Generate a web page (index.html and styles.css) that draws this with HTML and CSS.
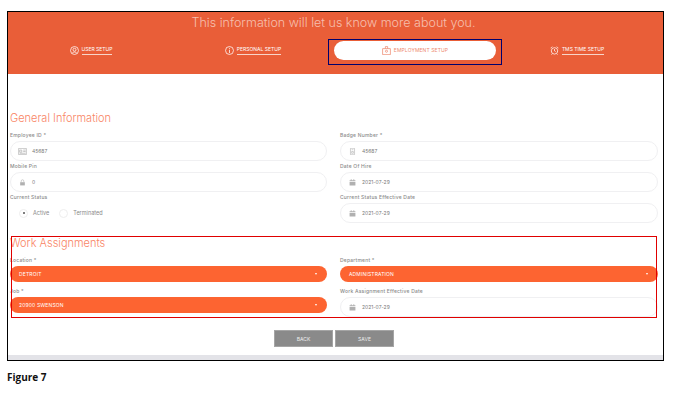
FILE: index.html
```html
<!DOCTYPE html>
<html lang="en">
<head>
<meta charset="utf-8">
<title>Employment Setup</title>
<link rel="stylesheet" href="styles.css">
</head>
<body>
<main class="frame">
  <header class="banner">
    <h1 class="banner-title">This information will let us know more about you.</h1>
    <nav class="tabs">
      <a class="tab">
        <svg class="tab-icon" viewBox="0 0 12 12"><circle cx="6" cy="6" r="5.300" class="ln"/><circle cx="6" cy="5" r="2" class="ln"/><path d="M3 9.300c.8-1.600 5.200-1.600 6 0" class="ln"/></svg>
        <span class="tab-text">USER SETUP</span>
      </a>
      <a class="tab">
        <svg class="tab-icon" viewBox="0 0 12 12"><circle cx="6" cy="6" r="5.300" class="ln"/><path d="M6 5v4.500M6 2.500v1.300" class="ln"/></svg>
        <span class="tab-text">PERSONAL SETUP</span>
      </a>
      <a class="tab tab-active">
        <svg class="tab-icon" viewBox="0 0 12 12"><path d="M.8 3.500h10.400v8H.8zM4.500 3.500V.8h3v2.700" class="ln"/><circle cx="6" cy="7" r="1.400" class="ln"/></svg>
        <span class="tab-text">EMPLOYMENT SETUP</span>
      </a>
      <a class="tab">
        <svg class="tab-icon" viewBox="0 0 12 12"><circle cx="6" cy="6.500" r="4.300" class="ln"/><path d="M6 4v2.500l1.500 1M.8 3l2.200-2.200M11.200 3L9 .8M3 10.500l-1 1M9 10.500l1 1" class="ln"/></svg>
        <span class="tab-text">TMS TIME SETUP</span>
      </a>
    </nav>
  </header>

  <section class="general">
    <h2 class="section-title">General Information</h2>
    <div class="columns">
      <div class="col">
        <div class="field">
          <label class="label">Employee ID *</label>
          <div class="input">
            <svg class="input-icon" viewBox="0 0 12 10"><path d="M.5.500h11v9H.5z" class="ln"/><path d="M2 3h3v3H2zM7 3h3.500M7 5h3.500M2 7.500h8.500" class="ln"/></svg>
            <span>45687</span>
          </div>
        </div>
        <div class="field">
          <label class="label">Mobile Pin</label>
          <div class="input">
            <svg class="input-icon" viewBox="0 0 12 12"><path d="M2 5.500h8V11H2z" class="fill"/><path d="M3.800 5.500V3.500a2.200 2.200 0 0 1 4.400 0v2" class="ln"/></svg>
            <span>0</span>
          </div>
        </div>
        <div class="field">
          <label class="label">Current Status</label>
          <div class="radios">
            <span class="radio radio-on"></span><span class="radio-text">Active</span>
            <span class="radio"></span><span class="radio-text">Terminated</span>
          </div>
        </div>
      </div>
      <div class="col">
        <div class="field">
          <label class="label">Badge Number *</label>
          <div class="input">
            <svg class="input-icon" viewBox="0 0 12 12"><path d="M2.500.500h7v11h-7z" class="ln"/><path d="M4.500 3h3M4.500 6h3v3h-3z" class="ln"/></svg>
            <span>45687</span>
          </div>
        </div>
        <div class="field">
          <label class="label">Date Of Hire</label>
          <div class="input">
            <svg class="input-icon" viewBox="0 0 12 12"><path d="M1 2h10v2H1zM1 5h10v6H1zM3 .500h1.500V2H3zM7.500.500H9V2H7.500z" class="fill"/></svg>
            <span>2021-07-29</span>
          </div>
        </div>
        <div class="field">
          <label class="label">Current Status Effective Date</label>
          <div class="input">
            <svg class="input-icon" viewBox="0 0 12 12"><path d="M1 2h10v2H1zM1 5h10v6H1zM3 .500h1.500V2H3zM7.500.500H9V2H7.500z" class="fill"/></svg>
            <span>2021-07-29</span>
          </div>
        </div>
      </div>
    </div>
  </section>

  <section class="work">
    <h2 class="section-title">Work Assignments</h2>
    <div class="columns">
      <div class="col">
        <div class="field">
          <label class="label">Location *</label>
          <div class="select"><span>DETROIT</span><i class="caret"></i></div>
        </div>
        <div class="field">
          <label class="label">Job *</label>
          <div class="select"><span>20900 SWENSON</span><i class="caret"></i></div>
        </div>
      </div>
      <div class="col">
        <div class="field">
          <label class="label">Department *</label>
          <div class="select"><span>ADMINISTRATION</span><i class="caret"></i></div>
        </div>
        <div class="field">
          <label class="label">Work Assignment Effective Date</label>
          <div class="input">
            <svg class="input-icon" viewBox="0 0 12 12"><path d="M1 2h10v2H1zM1 5h10v6H1zM3 .500h1.500V2H3zM7.500.500H9V2H7.500z" class="fill"/></svg>
            <span>2021-07-29</span>
          </div>
        </div>
      </div>
    </div>
    <div class="red-box"></div>
  </section>

  <div class="actions">
    <button class="btn">BACK</button>
    <button class="btn">SAVE</button>
  </div>
  <div class="foot-bar"></div>
</main>
<p class="caption">Figure 7</p>
</body>
</html>
```
FILE: styles.css
```css
* { box-sizing: border-box; }
html, body { margin: 0; padding: 0; background: #fff; }
body { width: 675px; height: 407px; overflow: hidden; font-family: "Inter", "Liberation Sans", sans-serif; }

.frame {
  width: 657px;
  height: 350px;
  margin: 11px 0 0 7px;
  border: 1px solid #000;
  display: flex;
  flex-direction: column;
  background: #fff;
}

.banner { height: 62px; background: #e95e38; color: #fff; flex: none; }
.banner-title {
  margin: 0;
  padding: 3px 4px 0 0;
  height: 27px;
  text-align: center;
  font-size: 12.500px;
  line-height: 15px;
  font-weight: 300;
  color: #f6bfae;
}
.tabs {
  display: grid;
  grid-template-columns: repeat(4, 162px);
  padding-left: 2px;
  height: 19px;
  margin-top: 2px;
}
.tab {
  position: relative;
  display: flex;
  align-items: center;
  justify-content: center;
  gap: 3px;
  font-size: 5px;
  color: #fff;
  height: 19px;
}
.tab-text { border-bottom: 1px solid #f8d5c9; line-height: 7px; padding-bottom: 1px; }
.tab-icon { width: 9px; height: 9px; flex: none; }
.ln { fill: none; stroke: currentColor; stroke-width: 1; }
.fill { fill: currentColor; }
.tab-active { background: #fff; border-radius: 10px; color: #ee8a70; }
.tab-active .tab-text { border: 0; padding: 0; letter-spacing: .1px; }
.tab-active::after {
  content: "";
  position: absolute;
  inset: -2px -6px -5px -6px;
  border: 1px solid #00006e;
}

.general { padding: 38px 5px 0 2px; flex: none; }
.section-title {
  margin: 0;
  font-size: 11px;
  line-height: 13px;
  font-weight: 300;
  color: #f98566;
}
.columns { display: grid; grid-template-columns: 317px 318px; column-gap: 13px; }
.general .columns { margin-top: 6px; }
.col { display: flex; flex-direction: column; }
.field { height: 31px; }
.label {
  display: block;
  height: 9px;
  font-size: 5px;
  line-height: 9px;
  letter-spacing: .2px;
  color: #8a8a8a;
  font-weight: 500;
}
.input {
  height: 20px;
  border: 1px solid #f0f0f2;
  border-radius: 10px;
  margin-top: 1px;
  padding-left: 7px;
  display: flex;
  align-items: center;
  gap: 5px;
  font-size: 5px;
  color: #7a7a7a;
  background: #fff;
}
.input-icon { width: 9px; height: 7px; color: #b0b0b0; flex: none; }

.radios { display: flex; align-items: center; height: 20px; padding-left: 9px; margin-top: 1px; font-size: 5.500px; color: #8a8a8a; }
.radio {
  width: 9px; height: 9px;
  border: 1px solid #eee;
  border-radius: 50%;
  position: relative;
  flex: none;
}
.radio-on::after {
  content: "";
  position: absolute;
  left: 2.500px; top: 2.500px;
  width: 2px; height: 2px;
  border-radius: 50%;
  background: #555;
}
.radio-text { margin: 0 10px 0 5px; }

.work { position: relative; padding: 18px 5px 0 2px; flex: none; margin-top: -5px; }
.work .columns { margin-top: 6px; }
.select {
  height: 16px;
  border-radius: 8px;
  background: #fd6431;
  color: #fff;
  font-size: 5px;
  letter-spacing: .15px;
  margin-top: 1px;
  display: flex;
  align-items: center;
  justify-content: space-between;
  padding: 0 10px 0 9px;
}
.caret {
  width: 0; height: 0;
  border-left: 1.500px solid transparent;
  border-right: 1.500px solid transparent;
  border-top: 2px solid #fff;
}
.red-box {
  position: absolute;
  left: 3px; right: 6px; top: 17px; bottom: 0;
  border: 1px solid #e00000;
  pointer-events: none;
}

.actions { display: flex; justify-content: center; gap: 2px; margin-top: 12px; padding-right: 3px; flex: none; }
.btn {
  width: 59px; height: 17px;
  background: #8a8a8a;
  border: 1px solid #a5a5a5;
  color: #eee;
  font-family: inherit;
  font-size: 5px;
  padding: 0;
}
.foot-bar { margin-top: auto; height: 5px; background: #e3e3e8; flex: none; }

.caption {
  margin: 10px 0 0 7px;
  font-family: "Open Sans", "Liberation Sans", sans-serif;
  font-weight: 700;
  font-size: 10px;
  line-height: 13px;
  color: #111;
}
```
